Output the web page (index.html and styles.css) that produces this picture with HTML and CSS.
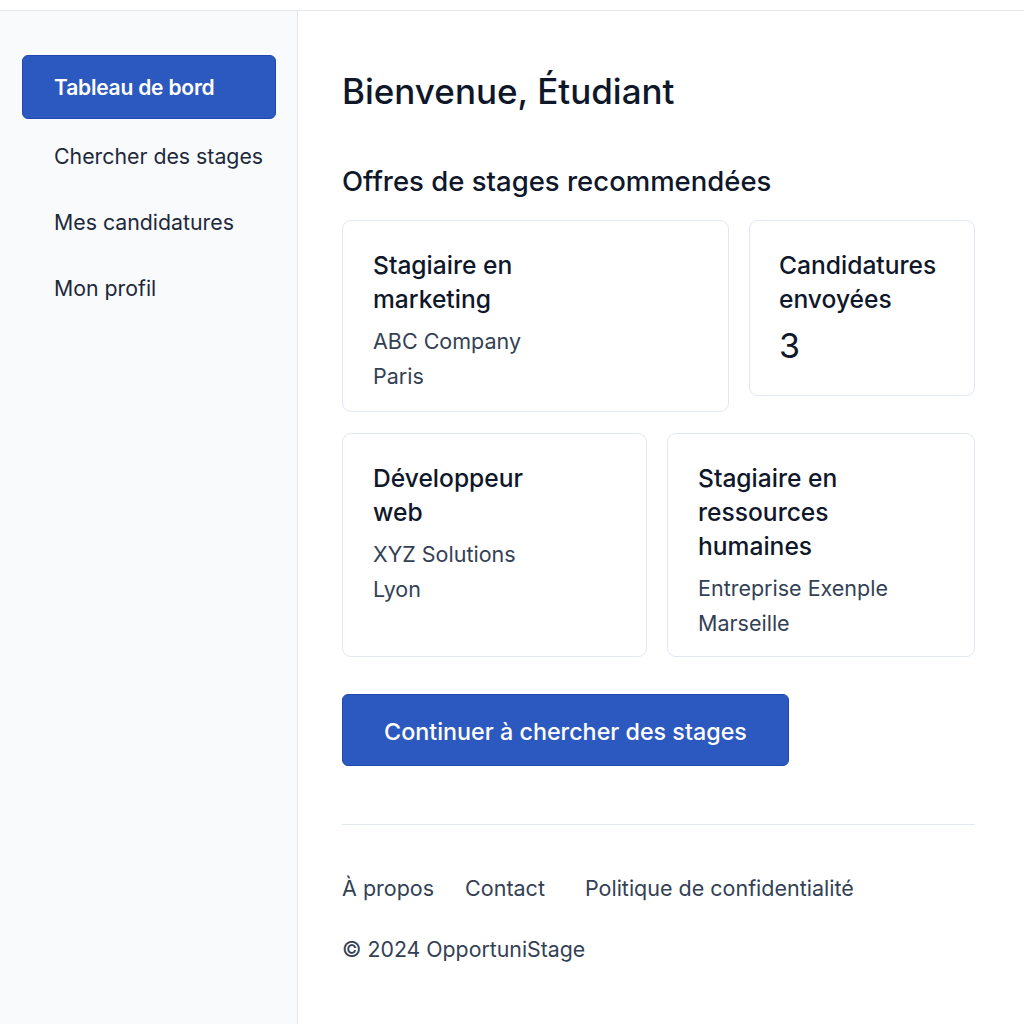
FILE: index.html
```html
<!DOCTYPE html>
<html lang="fr">
<head>
<meta charset="utf-8">
<title>OpportuniStage</title>
<link rel="stylesheet" href="styles.css">
</head>
<body>
<div class="topbar"></div>
<div class="layout">
  <aside class="sidebar">
    <nav class="nav">
      <a class="nav-item active" href="#">Tableau de bord</a>
      <a class="nav-item" href="#">Chercher des stages</a>
      <a class="nav-item" href="#">Mes candidatures</a>
      <a class="nav-item" href="#">Mon profil</a>
    </nav>
  </aside>
  <main class="main">
    <h1 class="title">Bienvenue, Étudiant</h1>
    <h2 class="subtitle">Offres de stages recommendées</h2>
    <div class="row row-top">
      <div class="card card-a">
        <div class="card-title">Stagiaire en marketing</div>
        <div class="card-line">ABC Company</div>
        <div class="card-line">Paris</div>
      </div>
      <div class="card card-b">
        <div class="card-title">Candidatures envoyées</div>
        <div class="card-num">3</div>
      </div>
    </div>
    <div class="row row-bottom">
      <div class="card card-c">
        <div class="card-title">Développeur web</div>
        <div class="card-line">XYZ Solutions</div>
        <div class="card-line">Lyon</div>
      </div>
      <div class="card card-d">
        <div class="card-title">Stagiaire en ressources humaines</div>
        <div class="card-line">Entreprise Exenple</div>
        <div class="card-line">Marseille</div>
      </div>
    </div>
    <button class="cta">Continuer à chercher des stages</button>
    <footer class="footer">
      <div class="links">
        <a href="#">À propos</a>
        <a href="#">Contact</a>
        <a href="#">Politique de confidentialité</a>
      </div>
      <div class="copy">© 2024 OpportuniStage</div>
    </footer>
  </main>
</div>
</body>
</html>
```
FILE: styles.css
```css
* { box-sizing: border-box; }
html, body { margin: 0; padding: 0; background: #fff; }
body {
  font-family: Inter, "Noto Sans", sans-serif;
  color: #0f172a;
  width: 1024px;
  height: 1024px;
  overflow: hidden;
}
.topbar {
  height: 11px;
  border-bottom: 1px solid #e5e7eb;
  background: #fff;
}
.layout {
  display: flex;
  height: 1013px;
}
.sidebar {
  width: 298px;
  flex: none;
  background: #f8fafc;
  border-right: 1px solid #e5e7eb;
  padding: 44px 21px 0 22px;
}
.nav {
  display: flex;
  flex-direction: column;
}
.nav-item {
  display: block;
  white-space: nowrap;
  text-decoration: none;
  color: #1e293b;
  font-size: 21.3px;
  line-height: 24px;
  padding: 20px 31px;
  border-radius: 6px;
  border: 1px solid transparent;
}
.nav-item.active {
  background: #2c59c0;
  border-color: #1f48b3;
  color: #fff;
  font-weight: 600;
  font-size: 21px;
  letter-spacing: -0.2px;
  padding: 20px 31px 18px;
  margin-bottom: 4px;
}
.main {
  flex: 1;
  padding: 60px 49px 0 44px;
}
.title {
  margin: 0;
  font-size: 35px;
  line-height: 40px;
  font-weight: 500;
  color: #0f172a;
}
.subtitle {
  margin: 54px 0 0;
  font-size: 27.5px;
  line-height: 32px;
  font-weight: 500;
  color: #0f172a;
}
.row {
  display: flex;
  gap: 20px;
}
.row-top {
  margin-top: 23px;
  align-items: flex-start;
}
.row-bottom {
  margin-top: 21px;
}
.card {
  background: #fff;
  border: 1px solid #e2e8f0;
  border-radius: 9px;
  padding: 27px 30px 18px;
}
.card-a { width: 387px; height: 192px; }
.card-b { width: 226px; height: 176px; padding-left: 29px; }
.card-c { width: 305px; height: 224px; }
.card-d { width: 308px; height: 224px; }
.card-title {
  max-width: 185px;
  font-size: 24.6px;
  line-height: 34px;
  font-weight: 500;
  color: #0f172a;
  margin-bottom: 8px;
}
.card-line {
  font-size: 21.5px;
  line-height: 35px;
  color: #334155;
}
.card-num {
  font-size: 34px;
  line-height: 44px;
  color: #0f172a;
}
.cta {
  display: block;
  margin-top: 37px;
  width: 447px;
  height: 72px;
  padding-top: 3px;
  background: #2c59c0;
  border: 1px solid #1f48b3;
  border-radius: 6px;
  color: #fff;
  font-family: Inter, "Noto Sans", sans-serif;
  font-size: 23.3px;
  font-weight: 500;
}
.footer {
  margin-top: 58px;
  border-top: 1px solid #e2e8f0;
  padding-top: 49px;
}
.links {
  display: flex;
  gap: 31px;
}
.links a {
  text-decoration: none;
  color: #334155;
  font-size: 21.5px;
  line-height: 28px;
}
.links a:nth-child(3) { margin-left: 9px; }
.copy {
  margin-top: 33px;
  font-size: 21.3px;
  line-height: 28px;
  color: #334155;
}
```
